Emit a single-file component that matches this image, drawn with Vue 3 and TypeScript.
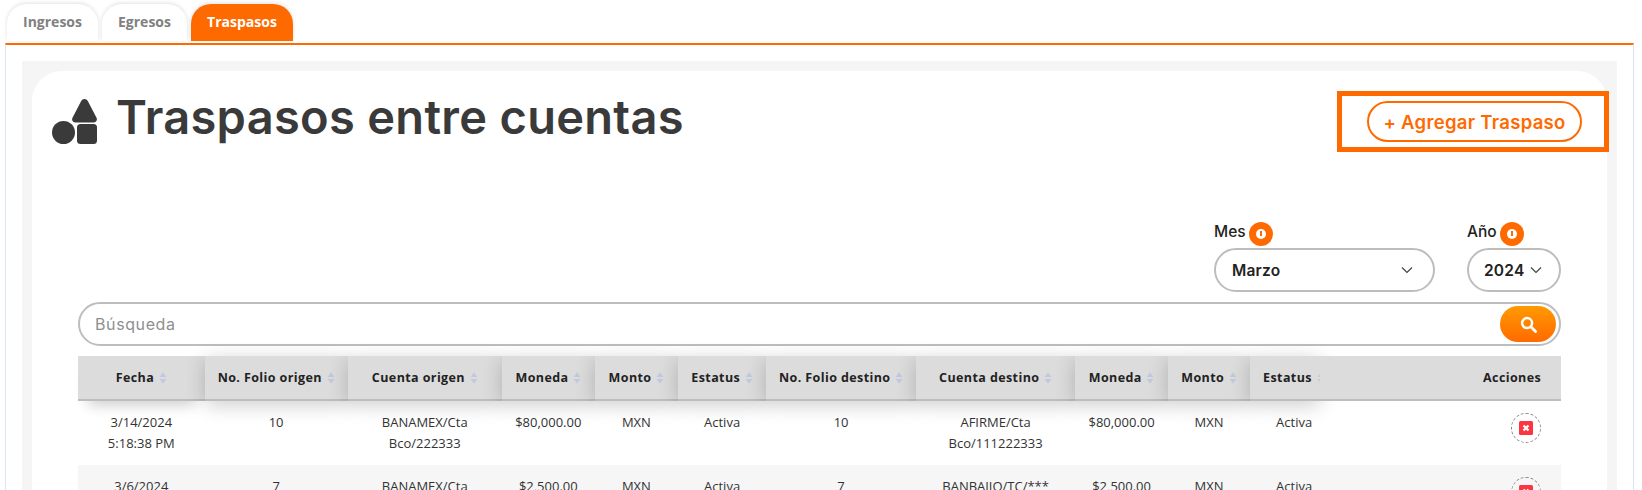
<template>
  <div class="page">
    <div class="tabs">
      <button
        v-for="tab in tabs"
        :key="tab.label"
        :class="['tab', { active: tab.label === activeTab }]"
        :style="{ width: tab.width + 'px' }"
      >
        {{ tab.label }}
      </button>
    </div>

    <div class="panel">
      <div class="panel-inner">
        <div class="card">
          <div class="card-head">
            <div class="title-wrap">
              <svg class="title-icon" viewBox="0 0 45 45" width="45" height="45">
                <path d="M32.5 0c1.400 0 2.600.8 3.300 2.100l8.700 16.600c1.200 2.200-.3 4.800-2.900 4.800H23.400c-2.600 0-4.100-2.600-2.900-4.800l8.700-16.600C29.900.8 31.100 0 32.500 0z" fill="#3a3a3a" />
                <circle cx="11.500" cy="33.500" r="11.500" fill="#3a3a3a" />
                <rect x="25" y="25" width="20" height="20" rx="3.500" fill="#3a3a3a" />
              </svg>
              <h1 class="title">Traspasos entre cuentas</h1>
            </div>
            <div class="add-outline">
              <button class="add-btn">+ Agregar Traspaso</button>
            </div>
          </div>

          <div class="filters">
            <div class="field">
              <label class="field-label">Mes<span class="info"><i></i></span></label>
              <div class="select select-month">
                <span>Marzo</span>
                <svg viewBox="0 0 12 8" width="12" height="8"><path d="M1 1.500l5 5 5-5" fill="none" stroke="#444" stroke-width="1.200" /></svg>
              </div>
            </div>
            <div class="field">
              <label class="field-label">Año<span class="info"><i></i></span></label>
              <div class="select select-year">
                <span>2024</span>
                <svg viewBox="0 0 12 8" width="12" height="8"><path d="M1 1.500l5 5 5-5" fill="none" stroke="#444" stroke-width="1.200" /></svg>
              </div>
            </div>
          </div>

          <div class="search">
            <span class="search-text">Búsqueda</span>
            <button class="search-btn">
              <svg viewBox="0 0 18 18" width="17" height="17">
                <circle cx="7.500" cy="7.500" r="5.300" fill="none" stroke="#fff" stroke-width="2.600" />
                <path d="M11.500 11.500l5 5" stroke="#fff" stroke-width="3" stroke-linecap="round" />
              </svg>
            </button>
          </div>

          <table class="grid">
            <colgroup>
              <col v-for="(w, i) in colWidths" :key="i" :style="{ width: w + 'px' }" />
            </colgroup>
            <thead>
              <tr>
                <th v-for="h in headers" :key="h.label + h.left" :class="{ 'th-left': h.left }">
                  {{ h.label }}
                  <svg class="sort" viewBox="0 0 8 12" width="8" height="12">
                    <path d="M4 .5L7.500 5H.5zM4 11.500L.5 7h7z" fill="#bfcbdc" />
                  </svg>
                </th>
                <th class="th-actions">Acciones</th>
              </tr>
            </thead>
            <tbody>
              <tr v-for="row in rows" :key="row.fecha">
                <td v-html="row.fecha"></td>
                <td>{{ row.folioO }}</td>
                <td v-html="row.cuentaO"></td>
                <td>{{ row.monto }}</td>
                <td>MXN</td>
                <td>Activa</td>
                <td>{{ row.folioD }}</td>
                <td v-html="row.cuentaD"></td>
                <td>{{ row.monto }}</td>
                <td>MXN</td>
                <td class="td-left">Activa</td>
                <td class="td-actions">
                  <span class="del">
                    <svg viewBox="0 0 14 14" width="14" height="14">
                      <rect width="14" height="14" rx="1.500" fill="#fb3640" />
                      <path d="M4.500 4.500l5 5M9.500 4.500l-5 5" stroke="#fff" stroke-width="2.200" />
                    </svg>
                  </span>
                </td>
              </tr>
            </tbody>
          </table>
        </div>
      </div>
    </div>
  </div>
</template>

<script setup lang="ts">
const activeTab = 'Traspasos'

const tabs = [
  { label: 'Ingresos', width: 91 },
  { label: 'Egresos', width: 85 },
  { label: 'Traspasos', width: 102 },
]

const colWidths = [126.6, 143, 154.3, 92.8, 83.4, 88, 150, 159, 93, 82, 70, 241]

const headers = [
  { label: 'Fecha' },
  { label: 'No. Folio origen' },
  { label: 'Cuenta origen' },
  { label: 'Moneda' },
  { label: 'Monto' },
  { label: 'Estatus' },
  { label: 'No. Folio destino' },
  { label: 'Cuenta destino' },
  { label: 'Moneda' },
  { label: 'Monto' },
  { label: 'Estatus', left: true },
]

const rows = [
  {
    fecha: '3/14/2024<br>5:18:38 PM',
    folioO: '10',
    cuentaO: 'BANAMEX/Cta<br>Bco/222333',
    monto: '$80,000.00',
    folioD: '10',
    cuentaD: 'AFIRME/Cta<br>Bco/111222333',
  },
  {
    fecha: '3/6/2024',
    folioO: '7',
    cuentaO: 'BANAMEX/Cta',
    monto: '$2,500.00',
    folioD: '7',
    cuentaD: 'BANBAJIO/TC/***',
  },
]
</script>

<style>
html,
body {
  overflow: hidden;
  background: #fff;
}
</style>

<style scoped>
.page {
  height: 490px;
  overflow: hidden;
  padding-left: 5px;
  width: 1642px;
  box-sizing: border-box;
  font-family: "Open Sans", "Liberation Sans", sans-serif;
}

.tabs {
  display: flex;
  gap: 4px;
  padding: 4px 0 0 2px;
  height: 43px;
  box-sizing: border-box;
  width: 1629px;
}

.tab {
  height: 37px;
  border: none;
  background: #fff;
  color: #808080;
  font-family: inherit;
  font-size: 14px;
  font-weight: 700;
  border-radius: 20px 20px 0 0;
  box-shadow: 0 -1px 4px rgba(0, 0, 0, 0.12);
  padding: 0 0 2px;
}

.tab.active {
  background: #ff6a00;
  color: #fff;
}

.panel {
  width: 1629px;
  height: 460px;
  box-sizing: border-box;
  border-top: 2px solid #ff6a00;
  border-left: 1px solid #dce6f0;
  border-right: 1px solid #dce6f0;
  padding: 16px 16px 0 16px;
}

.panel-inner {
  background: #f5f5f5;
  padding: 10px 10px 0 10px;
  height: 500px;
}

.card {
  background: #fff;
  border-radius: 30px 30px 0 0;
  padding: 20px 46px 0 46px;
  height: 500px;
}

.card-head {
  display: flex;
  justify-content: space-between;
  align-items: flex-start;
  height: 131px;
}

.title-wrap {
  display: flex;
  align-items: flex-start;
  gap: 19px;
  margin-left: -26px;
}

.title-icon {
  margin-top: 8px;
}

.title {
  margin: 0;
  font-family: Inter, "Liberation Sans", sans-serif;
  font-size: 47px;
  font-weight: 600;
  letter-spacing: 0.3px;
  line-height: 52px;
  color: #3a3a3a;
}

.add-outline {
  border: 5px solid #ff6a00;
  width: 272px;
  height: 61px;
  box-sizing: border-box;
  margin-right: -48px;
  display: flex;
  justify-content: flex-end;
  padding: 5px 22px 0 0;
}

.add-btn {
  width: 215px;
  height: 41px;
  border: 2px solid #ff6a00;
  border-radius: 21px;
  background: #fff;
  color: #ff6a00;
  font-family: Inter, "Liberation Sans", sans-serif;
  font-size: 18.500px;
  font-weight: 600;
  letter-spacing: 0.3px;
  padding: 0;
}

.filters {
  display: flex;
  justify-content: flex-end;
  gap: 32px;
}

.field-label {
  display: flex;
  align-items: flex-start;
  height: 26px;
  font-family: Inter, "Liberation Sans", sans-serif;
  font-size: 15.500px;
  font-weight: 500;
  color: #222;
  line-height: 20px;
}

.info {
  width: 24px;
  height: 24px;
  border-radius: 50%;
  background: #ff6a00;
  margin-left: 3px;
  display: flex;
  align-items: center;
  justify-content: center;
}

.info i {
  width: 10px;
  height: 10px;
  border-radius: 50%;
  background: #fff;
  position: relative;
}

.info i::after {
  content: "";
  position: absolute;
  left: 4px;
  top: 2px;
  width: 2px;
  height: 5px;
  background: #ff6a00;
}

.select {
  height: 44px;
  box-sizing: border-box;
  border: 2px solid #bdbdbd;
  border-radius: 22px;
  display: flex;
  align-items: center;
  justify-content: space-between;
  font-family: Inter, "Liberation Sans", sans-serif;
  font-size: 15.500px;
  font-weight: 600;
  letter-spacing: 0.2px;
  color: #222;
}

.select-month {
  width: 221px;
  padding: 0 20px 0 16px;
}

.select-year {
  width: 94px;
  padding: 0 17px 0 15px;
}

.search {
  margin-top: 10px;
  height: 44px;
  box-sizing: border-box;
  border: 2px solid #bdbdbd;
  border-radius: 22px;
  display: flex;
  align-items: center;
  justify-content: space-between;
  padding: 0 3px 0 15px;
}

.search-text {
  font-family: Inter, "Liberation Sans", sans-serif;
  font-size: 16px;
  letter-spacing: 0.6px;
  color: #8f8f8f;
}

.search-btn {
  width: 56px;
  height: 36px;
  border: none;
  border-radius: 18px;
  background: linear-gradient(#ff9a00, #ff6a00);
  display: flex;
  align-items: center;
  justify-content: center;
  padding: 0;
}

.grid {
  margin-top: 10px;
  width: 1483px;
  table-layout: fixed;
  border-collapse: separate;
  border-spacing: 0;
  font-size: 13px;
  color: #333;
}

.grid th {
  position: relative;
  height: 43px;
  background: #dcdcdc;
  border-bottom: 2px solid #bdbdbd;
  font-size: 12.500px;
  font-weight: 700;
  color: #222;
  padding: 0;
  text-align: center;
  white-space: nowrap;
  box-shadow: 0 4px 20px rgba(0, 0, 0, 0.2);
  letter-spacing: 0.4px;
}

.grid th:first-child {
  box-shadow: 0 14px 14px -10px rgba(0, 0, 0, 0.2);
}

.grid .th-left {
  text-align: left;
  padding-left: 13px;
}

.grid .th-actions {
  text-align: right;
  padding-right: 20px;
  box-shadow: none;
}

.sort {
  vertical-align: -2px;
  margin-left: 1px;
}

.grid td {
  height: 64px;
  box-sizing: border-box;
  vertical-align: top;
  text-align: center;
  padding: 11px 5px 0;
  line-height: 20.500px;
}

.grid tr:nth-child(2) td {
  background: #f6f6f6;
}

.grid .td-left {
  text-align: left;
  padding-left: 26px;
}

.grid .td-actions {
  text-align: right;
  padding: 12px 20px 0 0;
}

.del {
  display: inline-flex;
  width: 30px;
  height: 30px;
  box-sizing: border-box;
  border: 1px dashed #8a8a8a;
  border-radius: 50%;
  align-items: center;
  justify-content: center;
}
</style>
